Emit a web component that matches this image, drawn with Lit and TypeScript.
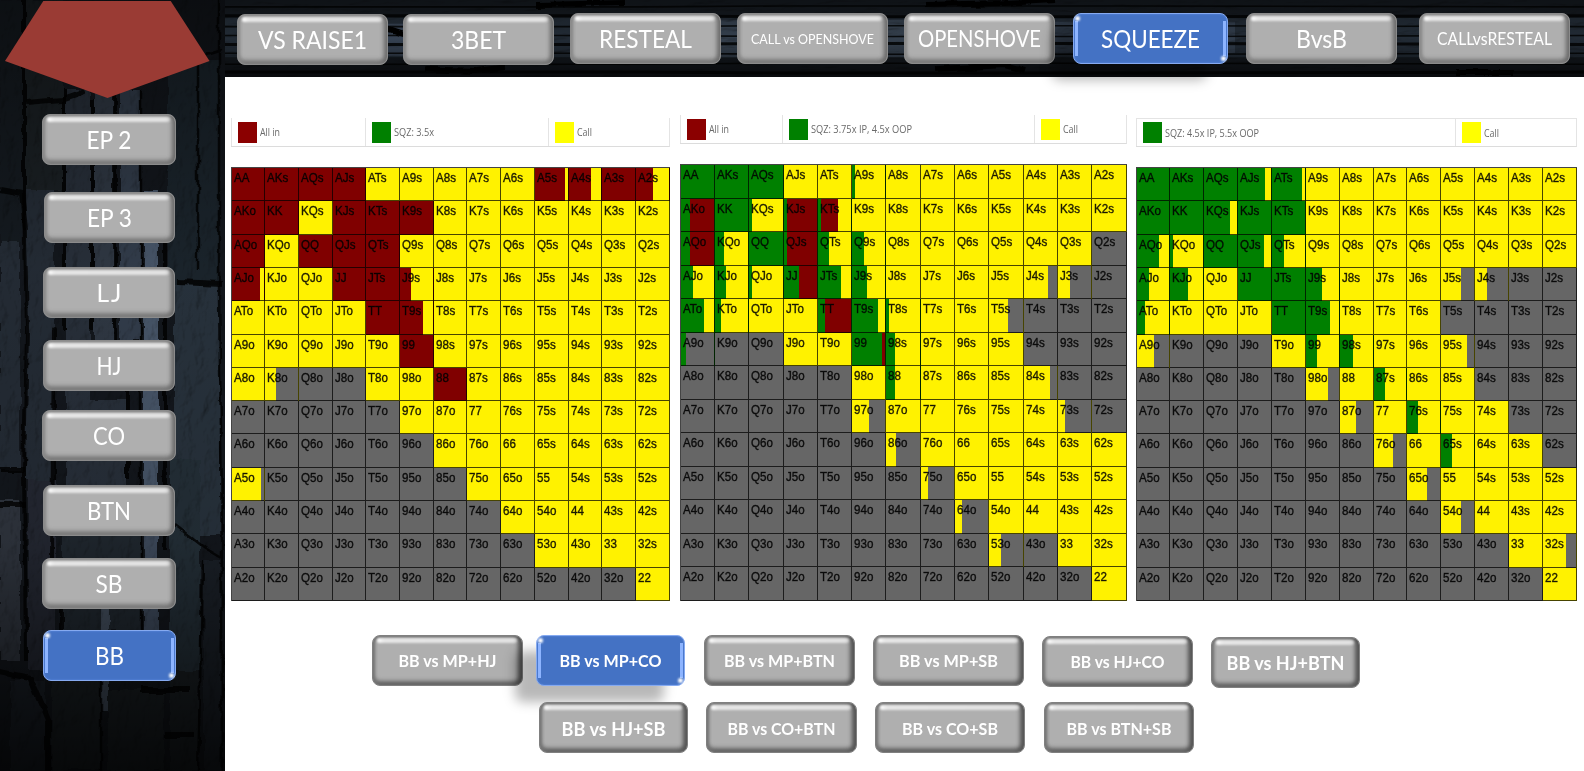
import { LitElement, html, svg, css } from "lit";
import { customElement, property } from "lit/decorators.js";
import { styleMap } from "lit/directives/style-map.js";

const RANKS = "AKQJT98765432".split("");
const COLORS: Record<string, string> = { r: "#800000", g: "#008000", y: "#fff200", x: "#666666" };

// Range notation: action letters with the share (in %) of the cell they take; "*n" repeats a token.
const RANGES: string[][] = [
  [
    "r*4 y*5 r90y r70y r r52y",
    "r*2 y r*3 y*7",
    "r y r*3 y*8",
    "r88y y*2 r*2 r34y y*7",
    "y*4 r r70y y*7",
    "y*5 r y*7",
    "y y34x x*2 y*2 r y*6",
    "x*5 y*8",
    "x*6 y*7",
    "y90x x*6 y*6",
    "x*8 y*5",
    "x*9 y*4",
    "x*12 y",
  ],
  [
    "g*3 y*2 g10y y*7",
    "g26r g g10y g9r g10r50y y*8",
    "g26r g26y g g9r g33y g37y y*6 x",
    "g36y g34y g9y g45r g70y g45y y*4 y72x y36x x",
    "g70y g17y y*2 g20r g80y g10y y*2 y56x x*3",
    "g16x x*2 y*2 g90r g26y y*3 x*3",
    "x*5 y g26y y*3 y80x x*2",
    "x*5 y52x y*5 y20x x",
    "x*6 y30x y*6",
    "x*7 y20x y*5",
    "x*8 y20x y*4",
    "x*9 y34x x y*2",
    "x*12 y",
  ],
  [
    "g*3 g83y g90y y*8",
    "g*2 g80y g*2 y*8",
    "g70y g9y g g80y g37y y*8",
    "g38y g55y y g*2 g50y y*3 y62x y36x x*2",
    "g26y y*3 g g74y y*3 x*4",
    "y52x x*3 y g33y g38y y*2 y80x x*3",
    "x*5 y66x y g33y y*2 x*3",
    "x*6 y50x y g33y y*2 x*2",
    "x*7 y60x y g33y y*2 x",
    "x*8 y60x y*4",
    "x*9 y60x y*3",
    "x*11 y y70x",
    "x*12 y",
  ],
];

function fill(token: string): string {
  const parts = [...token.matchAll(/([rgyx])(\d*)/g)];
  if (parts.length === 1) return COLORS[parts[0][1]];
  let at = 0;
  const stops = parts.map(([, key, share]) => {
    const from = at;
    at = share ? at + Number(share) : 100;
    return `${COLORS[key]} ${from}% ${at}%`;
  });
  return `linear-gradient(90deg, ${stops.join(", ")})`;
}

function expand(row: string): string[] {
  return row.split(" ").flatMap((t) => {
    const [token, n] = t.split("*");
    return Array(Number(n || 1)).fill(token);
  });
}

function hand(row: number, col: number): string {
  if (row === col) return RANKS[row] + RANKS[col];
  return col > row ? RANKS[row] + RANKS[col] + "s" : RANKS[col] + RANKS[row] + "o";
}

@customElement("bevel-button")
export class BevelButton extends LitElement {
  @property() label = "";
  @property({ type: Number }) size = 25;
  @property({ type: Number }) span = 60;
  @property({ type: Number }) rise = 0;
  @property({ type: Boolean, reflect: true }) active = false;
  @property({ type: Boolean, reflect: true }) strong = false;
  @property({ type: Boolean, reflect: true }) floating = false;

  static styles = css`
    :host { display: block; height: 51px; flex: none; }
    .face {
      position: relative; box-sizing: border-box; width: 100%; height: 100%; padding: 0;
      border: 1px solid #8b8b8b; border-radius: 8px; background: #afafaf;
      box-shadow: inset 2px 0 3px #8a8a8a, inset -3px 0 4px #6c6c6c,
        inset 0 -4px 4px #7c7c7c, inset 0 2px 1px #a2a2a2;
      display: block; color: #fff;
    }
    .shine {
      position: absolute; left: 4px; right: 5px; top: 2px; height: 5px; border-radius: 3px;
      background: linear-gradient(90deg, #fff 0, #e6e6e6 7px, #e2e2e2 calc(100% - 4px), #cccccc);
      filter: blur(0.9px);
    }
    :host([strong]) .face {
      border-color: #808080;
      box-shadow: inset 2px 0 3px #777, inset -4px 0 4px #555,
        inset 0 -4px 4px #686868, inset 0 2px 1px #999;
    }
    :host([active]) .face {
      background: #4472c4; border-color: #86aaf0;
      box-shadow: inset 0 0 2px #5f8fe6;
    }
    :host([active]) .shine {
      left: 1px; right: 1px; top: 7px; bottom: 7px; height: auto; border-radius: 0; filter: blur(0.6px);
      background: linear-gradient(90deg, #8db4ff 0 3px, transparent 3px calc(100% - 3px), #8db4ff calc(100% - 3px));
    }
    .spark { position: absolute; width: 5px; height: 5px; border-radius: 50%; background: #fff; filter: blur(0.8px); }
    .start { left: 1px; top: 2px; }
    .end { right: 1px; bottom: 2px; }
    :host([floating]) { position: relative; }
    .shade {
      position: absolute; left: -21px; top: 16px; width: 100%; height: 100%; border-radius: 8px;
      background: rgba(0, 0, 0, 0.28); filter: blur(6px);
    }
    .label { position: absolute; inset: 0; width: 100%; height: 100%; overflow: visible; }
    .text { font-family: Lato, "Open Sans", sans-serif; fill: #fff; text-anchor: middle; font-weight: 400; }
    .short { letter-spacing: 2px; }
    :host([strong]) .text { font-weight: 700; }
  `;

  private caption() {
    const dy = this.size * 0.36 + 1 - this.rise;
    return this.label === "LJ"
      ? svg`<text class="text short" x="50%" y="50%" dx="1" dy=${dy} font-size=${this.size}>${this.label}</text>`
      : svg`<text class="text" x="50%" y="50%" dy=${dy} font-size=${this.size}
          textLength=${this.span} lengthAdjust="spacingAndGlyphs">${this.label}</text>`;
  }

  render() {
    return html`
      ${this.floating ? html`<div class="shade"></div>` : ""}
      <button class="face">
        <span class="shine"></span>
        ${this.active ? html`<span class="spark start"></span><span class="spark end"></span>` : ""}
        <svg class="label">${this.caption()}</svg>
      </button>
    `;
  }
}

@customElement("rock-wall")
export class RockWall extends LitElement {
  @property() direction: "vertical" | "horizontal" = "vertical";

  static styles = css`
    :host { display: block; width: 100%; height: 100%; overflow: hidden; }
    .wall { display: block; width: 100%; height: 100%; }
    .grain { mix-blend-mode: multiply; }
  `;

  private column() {
    const slabs: [number, number, number, number, string][] = [
      [0, 0, 22, 240, "#171b21"], [26, 0, 36, 190, "#1a2027"], [26, 190, 28, 290, "#272e37"], [66, 90, 24, 360, "#2a333e"],
      [66, 400, 60, 90, "#2a333e"], [94, 90, 20, 280, "#303a47"], [120, 90, 20, 250, "#354150"], [144, 190, 14, 310, "#4b5a6e"],
      [62, 500, 78, 130, "#222933"], [168, 60, 52, 225, "#1e252e"], [174, 285, 46, 250, "#2b3440"], [170, 460, 30, 210, "#28303b"],
      [204, 560, 16, 210, "#1b2129"], [0, 500, 20, 160, "#303842"], [0, 240, 20, 230, "#282f38"], [28, 480, 28, 190, "#252c35"],
      [101, 610, 8, 100, "#465264"], [10, 680, 36, 90, "#1d232a"], [52, 680, 48, 90, "#1a2027"], [108, 690, 56, 80, "#1a2027"], [144, 500, 14, 150, "#435062"],
      [170, 670, 28, 100, "#1a2027"],
    ];
    return svg`
      <rect width="225" height="771" fill="#14181e"></rect>
      <g filter="url(#rough)">
        ${slabs.map(([x, y, w, h, c]) => svg`<rect x=${x} y=${y} width=${w} height=${h} fill=${c}></rect>`)}
      </g>
      <rect width="225" height="771" filter="url(#grain)" opacity=".75" class="grain"></rect>
      <g fill="none" stroke="#020304" stroke-opacity=".8" stroke-linejoin="round" filter="url(#rough)">
        <path stroke-width="4" d="M24 0V190L27 330L24 470L26 660M54 480V330L52 560M64 90V330M92 100V330M115 90V390M128 340V480M62 560V640M165 220V550"></path>
        <path stroke-width="2.5" d="M219 0V300L222 500V771M203 560L198 771M198 60V270M175 525L205 548L222 558M190 60L222 50M141 90V640M101 640V771"></path>
        <path stroke-width="6" d="M26 103L62 100L85 92M0 190L22 194L26 230M0 470H24M0 505H26M0 672L30 678L48 720V771M140 690L190 690M178 282L222 284M165 735H195"></path>
      </g>
      <rect width="225" height="771" fill="url(#shadeV)"></rect>`;
  }

  private beam() {
    const lines = [7, 16, 27, 36, 45, 54, 65, 73];
    return svg`
      <rect width="1359" height="78" fill="#151a20"></rect>
      <rect y="18" width="1359" height="40" fill="#222b35"></rect>
      <rect x="150" y="24" width="120" height="33" fill="#364252"></rect>
      <rect x="480" y="20" width="220" height="38" fill="#343f4c"></rect>
      <rect x="820" y="22" width="190" height="32" fill="#303b49"></rect>
      <rect width="1359" height="78" filter="url(#grain)" opacity=".7" class="grain"></rect>
      <g fill="none" stroke="#020304" stroke-opacity=".85">
        ${lines.map((y, i) => svg`<path stroke-width=${i % 3 === 1 ? 3 : 1.6} d="M0 ${y}H420L560 ${y + (i % 2 ? 1 : -1)}H900L1359 ${y}"></path>`)}
      </g>
      <g fill="none" stroke="#020304" filter="url(#rough)">
        <path stroke-width="6" d="M160 28L178 34M310 5L400 3M700 5L780 3L830 0M200 70L250 72L280 68M710 70L780 66L800 72M1230 73H1290"></path>
      </g>
      <rect width="1359" height="78" fill="url(#shadeH)"></rect>`;
  }

  render() {
    const v = this.direction === "vertical";
    return html`
      <svg class="wall" viewBox=${v ? "0 0 225 771" : "0 0 1359 78"} preserveAspectRatio="none">
        <defs>
          <filter id="grain" x="0" y="0" width="100%" height="100%">
            <feTurbulence type="fractalNoise" baseFrequency=${v ? "0.08 0.05" : "0.03 0.15"} numOctaves="4" seed="8"></feTurbulence>
            <feDiffuseLighting surfaceScale="3" lighting-color="#ffffff" diffuseConstant="1.25">
              <feDistantLight azimuth="215" elevation="52"></feDistantLight>
            </feDiffuseLighting>
          </filter>
          <filter id="rough">
            <feTurbulence type="fractalNoise" baseFrequency="0.06" numOctaves="3" seed="3"></feTurbulence>
            <feDisplacementMap in="SourceGraphic" scale="6" xChannelSelector="R" yChannelSelector="G"></feDisplacementMap>
            <feGaussianBlur stdDeviation="0.6"></feGaussianBlur>
          </filter>
          <linearGradient id="shadeV" x2="0" y2="1">
            <stop offset="0" stop-color="#000" stop-opacity=".45"></stop>
            <stop offset=".35" stop-color="#000" stop-opacity=".08"></stop>
            <stop offset=".7" stop-color="#000" stop-opacity=".15"></stop>
            <stop offset="1" stop-color="#000" stop-opacity=".75"></stop>
          </linearGradient>
          <linearGradient id="shadeH" x2="0" y2="1">
            <stop offset="0" stop-color="#000" stop-opacity=".3"></stop>
            <stop offset=".5" stop-color="#000" stop-opacity="0"></stop>
            <stop offset="1" stop-color="#000" stop-opacity=".6"></stop>
          </linearGradient>
        </defs>
        ${v ? this.column() : this.beam()}
      </svg>
    `;
  }
}

interface Item { color: string; label: string; span: number; width: number }

@customElement("range-chart")
export class RangeChart extends LitElement {
  @property({ attribute: false }) rows: string[] = [];
  @property({ attribute: false }) legend: Item[] = [];

  static styles = css`
    :host { display: flex; flex-direction: column; font-family: "Liberation Sans", Arial, sans-serif; }
    .legend {
      display: flex; box-sizing: border-box; height: 29px; margin-bottom: 20px;
      border: solid #e4e4e4; border-width: var(--legend-top, 0) 1px 1px 0; border-bottom-color: #dcdcdc;
    }
    .item { display: flex; box-sizing: border-box; align-items: center; gap: 3px; padding-left: 6px; border-left: 1px solid #e4e4e4; flex: none; }
    .item:last-child { flex: 1; }
    .swatch { width: 19.5px; height: 21px; }
    .caption { height: 16px; overflow: visible; }
    .name { font-family: "Open Sans", "Noto Sans", sans-serif; font-size: 11.6px; fill: #6a6a6a; }
    .grid {
      flex: 1; display: grid; grid-template: repeat(13, 1fr) / repeat(13, 1fr);
      border: solid #444; border-width: 1px 0 0 1px;
    }
    .cell {
      box-sizing: border-box; min-width: 0; min-height: 0; padding: 2px 0 0 2px;
      border: solid rgba(0, 0, 0, 0.72); border-width: 0 1px 1px 0;
      background-origin: border-box;
    }
    .hand {
      display: block; width: 30px; font-size: 12.6px; line-height: 14px; white-space: nowrap; color: rgba(0, 0, 0, 0.86);
      -webkit-text-stroke: 0.45px rgba(0, 0, 0, 0.7); transform: translateY(0.7px) scaleX(0.92); transform-origin: 0 0;
    }
  `;

  render() {
    return html`
      <div class="legend">
        ${this.legend.map((i) => html`
          <div class="item" style=${styleMap({ width: `${i.width}px` })}>
            <div class="swatch" style=${styleMap({ background: i.color })}></div>
            <svg class="caption" width=${i.span} height="16">
              <text class="name" x="0" y="12" textLength=${i.span} lengthAdjust="spacingAndGlyphs">${i.label}</text>
            </svg>
          </div>`)}
      </div>
      <div class="grid">
        ${this.rows.map((row, r) => expand(row).map((token, c) => html`
          <div class="cell" style=${styleMap({ background: fill(token) })}><span class="hand">${hand(r, c)}</span></div>`))}
      </div>
    `;
  }
}

interface Btn { label: string; w: number; gap: number; size: number; span: number; active?: boolean; top?: number; rise?: number }

const POSITIONS: Btn[] = [
  { label: "EP 2", w: 134, gap: 114, size: 24.5, span: 45 },
  { label: "EP 3", w: 131, gap: 27, size: 24.5, span: 45 },
  { label: "LJ", w: 132, gap: 24, size: 24.5, span: 20 },
  { label: "HJ", w: 132, gap: 22, size: 24.5, span: 25 },
  { label: "CO", w: 134, gap: 19, size: 24.5, span: 32 },
  { label: "BTN", w: 132, gap: 24, size: 24.5, span: 44 },
  { label: "SB", w: 134, gap: 22, size: 24.5, span: 27 },
  { label: "BB", w: 133, gap: 21, size: 24.5, span: 29, active: true },
];

const TABS: Btn[] = [
  { label: "VS RAISE1", w: 151, gap: 12, size: 25, span: 109, top: 1, rise: 1 },
  { label: "3BET", w: 151, gap: 15, size: 25, span: 55, top: 1, rise: 1 },
  { label: "RESTEAL", w: 151, gap: 16, size: 25, span: 93, rise: 1 },
  { label: "CALL vs OPENSHOVE", w: 151, gap: 16, size: 14, span: 123, rise: 1 },
  { label: "OPENSHOVE", w: 151, gap: 16, size: 24, span: 123, rise: 1 },
  { label: "SQUEEZE", w: 155, gap: 18, size: 25, span: 99, active: true, rise: 1 },
  { label: "BvsB", w: 151, gap: 18, size: 25, span: 51, rise: 1 },
  { label: "CALLvsRESTEAL", w: 151, gap: 22, size: 16.5, span: 115, rise: 0.5 },
];

const SPOTS: Btn[][] = [
  [
    { label: "BB vs MP+HJ", w: 151, gap: 0, size: 17.5, span: 98, rise: 1 },
    { label: "BB vs MP+CO", w: 149, gap: 13, size: 17.5, span: 102, active: true, rise: 0.5 },
    { label: "BB vs MP+BTN", w: 151, gap: 19, size: 17.5, span: 111, rise: 0.5 },
    { label: "BB vs MP+SB", w: 151, gap: 18, size: 17.5, span: 99, rise: 0.5 },
    { label: "BB vs HJ+CO", w: 151, gap: 18, size: 17.5, span: 94, top: 1, rise: 0.5 },
    { label: "BB vs HJ+BTN", w: 149, gap: 18, size: 19.5, span: 118, top: 2, rise: 0.5 },
  ],
  [
    { label: "BB vs HJ+SB", w: 149, gap: 0, size: 19.5, span: 104, rise: 0 },
    { label: "BB vs CO+BTN", w: 151, gap: 18, size: 17.5, span: 108, rise: 0 },
    { label: "BB vs CO+SB", w: 150, gap: 18, size: 17.5, span: 96, rise: 0 },
    { label: "BB vs BTN+SB", w: 150, gap: 19, size: 17.5, span: 105, rise: 0 },
  ],
];

const RED = "#8b0000", GREEN = "#008000", YELLOW = "#ffff00";

@customElement("app-root")
export class AppRoot extends LitElement {
  static styles = css`
    :host { display: grid; grid-template-columns: 225px 1fr; width: 1584px; height: 771px; background: #fff; overflow: hidden; }
    .side, .head { display: grid; }
    .side > *, .head > * { grid-area: 1 / 1; min-width: 0; min-height: 0; }
    .side { height: 771px; }
    .badge { width: 225px; height: 100px; position: relative; }
    .positions { display: flex; flex-direction: column; align-items: center; padding-right: 7px; position: relative; }
    .main { display: flex; flex-direction: column; min-width: 0; }
    .head { height: 77px; position: relative; }
    .tabs { display: flex; position: relative; padding-top: 13px; }
    .charts { display: flex; height: 524px; box-sizing: border-box; align-items: stretch; }
    .first { width: 439px; margin: 41px 0 0 5.6px; }
    .second { width: 447px; margin: 38px 0 0 10px; }
    .third { width: 441px; margin: 41px 0 0 9px; --legend-top: 1px; }
    .spots { display: flex; flex-direction: column; gap: 14px; padding: 34px 0 0 147px; }
    .line { display: flex; }
    .line + .line { padding-left: 167px; }
  `;

  private buttons(list: Btn[], strong: boolean, vertical = false) {
    return list.map((b) => html`
      <bevel-button .label=${b.label} .size=${b.size} .span=${b.span} .rise=${b.rise ?? 0} ?active=${b.active} ?strong=${strong}
        ?floating=${!!b.active && !vertical}
        style=${styleMap({
          width: `${b.w}px`,
          marginLeft: vertical ? "0" : `${b.gap}px`,
          marginTop: `${vertical ? b.gap : b.top ?? 0}px`,
        })}></bevel-button>`);
  }

  render() {
    return html`
      <nav class="side">
        <rock-wall direction="vertical"></rock-wall>
        <svg class="badge" viewBox="0 0 225 100">
          <path d="M43.3 1H170.7L209.5 61L107.5 98L5 61Z" fill="#9a3b34"></path>
        </svg>
        <div class="positions">${this.buttons(POSITIONS, false, true)}</div>
      </nav>
      <main class="main">
        <header class="head">
          <rock-wall direction="horizontal"></rock-wall>
          <div class="tabs">${this.buttons(TABS, false)}</div>
        </header>
        <section class="charts">
          <range-chart class="first" .rows=${RANGES[0]} .legend=${[
            { color: RED, label: "All in", span: 20, width: 134 },
            { color: GREEN, label: "SQZ: 3.5x", span: 40, width: 183 },
            { color: YELLOW, label: "Call", span: 15, width: 122 },
          ]}></range-chart>
          <range-chart class="second" .rows=${RANGES[1]} .legend=${[
            { color: RED, label: "All in", span: 20, width: 102 },
            { color: GREEN, label: "SQZ: 3.75x IP, 4.5x OOP", span: 101, width: 252 },
            { color: YELLOW, label: "Call", span: 15, width: 93 },
          ]}></range-chart>
          <range-chart class="third" .rows=${RANGES[2]} .legend=${[
            { color: GREEN, label: "SQZ: 4.5x IP, 5.5x OOP", span: 94, width: 319 },
            { color: YELLOW, label: "Call", span: 15, width: 122 },
          ]}></range-chart>
        </section>
        <section class="spots">
          ${SPOTS.map((line) => html`<div class="line">${this.buttons(line, true)}</div>`)}
        </section>
      </main>
    `;
  }
}
